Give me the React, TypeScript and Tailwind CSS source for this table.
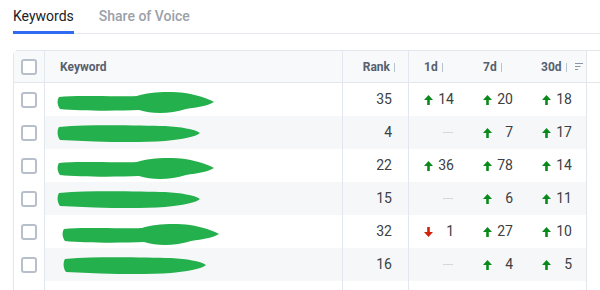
import React from 'react';

type Delta = number | null;

interface Row {
  rank: number | null;
  d1: Delta;
  d7: Delta;
  d30: Delta;
  long: boolean;
  shift: number;
}

const rows: Row[] = [
  { rank: 35, d1: 14, d7: 20, d30: 18, long: true, shift: 0 },
  { rank: 4, d1: null, d7: 7, d30: 17, long: false, shift: 0 },
  { rank: 22, d1: 36, d7: 78, d30: 14, long: true, shift: 0 },
  { rank: 15, d1: null, d7: 6, d30: 11, long: false, shift: 0 },
  { rank: 32, d1: -1, d7: 27, d30: 10, long: true, shift: 5 },
  { rank: 16, d1: null, d7: 4, d30: 5, long: false, shift: 6 },
];

const font = { fontFamily: 'Roboto, "Noto Sans", sans-serif' };

function Checkbox() {
  return <span className="block h-4 w-4 rounded-[3px] border-2 border-[#b7bfca] bg-white" />;
}

function Info() {
  return <span className="ml-1 inline-block h-[9px] w-px translate-y-[1px] bg-[#b9c3cf]" />;
}

function Arrow({ down }: { down?: boolean }) {
  return (
    <svg width="9" height="10" viewBox="0 0 9 10" className={down ? 'rotate-180' : ''}>
      <path d="M4.5 0 L9 5 H5.8 V10 H3.2 V5 H0 Z" fill={down ? '#d2210f' : '#0b8a1c'} />
    </svg>
  );
}

// redaction marks drawn over the keyword text
function Scribble({ long }: { long: boolean }) {
  if (long) {
    return (
      <svg width="158" height="23" viewBox="0 0 158 23">
        <path
          d="M2 6 C20 4 55 6 80 5 C92 1 112 0 128 2 C140 4 150 7 157 11 C151 15 141 16 129 18 C113 23 95 23 82 19 C60 20 22 20 3 18 C0 14 0 9 2 6 Z"
          fill="#24b04c"
        />
      </svg>
    );
  }
  return (
    <svg width="144" height="21" viewBox="0 0 144 21">
      <path
        d="M2 4 C40 1 85 3 108 3 C124 4 137 6 143 10 C138 14 126 16 108 18 C80 20 40 19 3 17 C0 13 0 7 2 4 Z"
        fill="#24b04c"
      />
    </svg>
  );
}

function DeltaCell({ v, gray }: { v: Delta; gray: boolean }) {
  return (
    <div className={`flex h-full items-center justify-between pl-[15px] pr-[14px] ${gray ? 'bg-[#f6f7f9]' : ''}`}>
      {v === null ? (
        <>
          <span />
          <span className="mr-[1px] h-px w-[10px] bg-[#d3d8de]" />
        </>
      ) : (
        <>
          <Arrow down={v < 0} />
          <span className="text-[14px] text-[#3c4043]">{Math.abs(v)}</span>
        </>
      )}
    </div>
  );
}

export default function App() {
  return (
    <div className="h-[290px] w-[600px] overflow-hidden bg-white" style={font}>
      {/* Tabs */}
      <div className="ml-[13px] flex gap-[25px] border-b border-[#e6e9ee]">
        <div className="relative pb-[7px] pt-[6px] text-[14px] leading-5 text-[#202124]">
          Keywords
          <span className="absolute -bottom-px left-0 right-0 h-[3px] bg-[#2f6bf0]" />
        </div>
        <div className="pb-[7px] pt-[6px] text-[14px] font-medium leading-5 text-[#9ba1a9]">Share of Voice</div>
      </div>

      {/* Table */}
      <div className="ml-[13px] mt-4 w-[640px] rounded-tl-[5px] border-l border-t border-[#e2e7ee]">
        <div className="grid grid-cols-[31px_298px_66px_59px_59px_60px_1fr] text-[12px] font-bold text-[#56606e]">
          <div className="flex h-[32px] items-center justify-center border-b border-r border-[#e2e7ee] bg-[#f8f9fb] pr-px">
            <Checkbox />
          </div>
          <div className="flex h-[32px] items-center border-b border-r border-[#e2e7ee] bg-[#f8f9fb] pl-[15px]">Keyword</div>
          <div className="flex h-[32px] items-center justify-end border-b border-r border-[#e2e7ee] bg-[#f8f9fb] pr-[13px]">
            Rank
            <Info />
          </div>
          <div className="flex h-[32px] items-center border-b border-[#e2e7ee] bg-[#f8f9fb] pl-[15px]">
            1d
            <Info />
          </div>
          <div className="flex h-[32px] items-center border-b border-[#e2e7ee] bg-[#f8f9fb] pl-[15px]">
            7d
            <Info />
          </div>
          <div className="flex h-[32px] items-center border-b border-r border-[#e2e7ee] bg-[#f8f9fb] pl-[14px] pr-[3px]">
            30d
            <Info />
            <svg width="8" height="7" viewBox="0 0 8 7" className="ml-auto">
              <path d="M0 0.5 H8 M0 3.5 H5.5 M0 6.5 H3" stroke="#8c96a3" strokeWidth="1" />
            </svg>
          </div>
          <div className="h-[32px] border-b border-[#e2e7ee]" />

          {rows.map((r, i) => {
            const gray = i % 2 === 1;
            const bg = gray ? 'bg-[#f6f7f9]' : '';
            return (
              <React.Fragment key={i}>
                <div className="flex h-[33px] items-center justify-center border-r border-[#e2e7ee] pr-px">
                  <Checkbox />
                </div>
                <div className={`flex h-[33px] items-center border-r border-[#e2e7ee] pl-[12px] ${bg}`}>
                  <div style={{ marginLeft: r.shift, marginTop: r.long ? 5 : 1 }}>
                    <Scribble long={r.long} />
                  </div>
                </div>
                <div className={`flex h-[33px] items-center justify-end border-r border-[#e2e7ee] pr-4 text-[14px] font-normal text-[#3c4043] ${bg}`}>
                  {r.rank}
                </div>
                <div className="h-[33px] font-normal">
                  <DeltaCell v={r.d1} gray={gray} />
                </div>
                <div className="h-[33px] font-normal">
                  <DeltaCell v={r.d7} gray={gray} />
                </div>
                <div className="h-[33px] border-r border-[#e2e7ee] font-normal">
                  <DeltaCell v={r.d30} gray={gray} />
                </div>
                <div className="h-[33px]" />
              </React.Fragment>
            );
          })}

          {/* next row, below the fold */}
          <div className="h-[33px] border-r border-[#e2e7ee]" />
          <div className="h-[33px] border-r border-[#e2e7ee]" />
          <div className="h-[33px] border-r border-[#e2e7ee]" />
          <div className="h-[33px]" />
          <div className="h-[33px]" />
          <div className="h-[33px] border-r border-[#e2e7ee]" />
          <div className="h-[33px]" />
        </div>
      </div>
    </div>
  );
}
